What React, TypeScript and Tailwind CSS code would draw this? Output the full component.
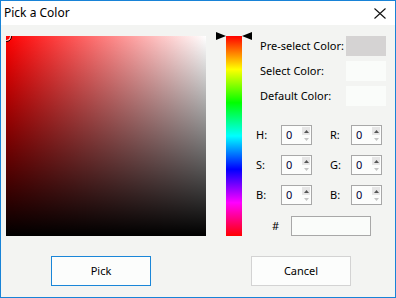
import React from 'react'

const font = { fontFamily: '"Segoe UI", "Noto Sans", "DejaVu Sans", sans-serif' }

const Spin: React.FC<{ label: string; labelW: string }> = ({ label, labelW }) => (
  <div className="flex items-center">
    <span className={`${labelW} text-[11px] text-black`}>{label}</span>
    <div className="flex h-[20px] w-[31px] items-stretch border border-[#a8a8a8] bg-[#fcfdfc]">
      <span className="flex-1 pl-[4px] text-[11px] leading-[18px] text-[#000033]">0</span>
      <div className="flex w-[9px] flex-col py-[1px] pr-[1px]">
        <div className="flex flex-1 items-center justify-center bg-[#e6e6e6]">
          <svg width="5" height="3" viewBox="0 0 5 3">
            <polygon points="2.5,0 5,3 0,3" fill="#555" />
          </svg>
        </div>
        <div className="flex flex-1 items-center justify-center">
          <svg width="5" height="3" viewBox="0 0 5 3">
            <polygon points="0,0 5,0 2.5,3" fill="#c4c4c4" />
          </svg>
        </div>
      </div>
    </div>
  </div>
)

export default function App() {
  return (
    <div
      className="flex h-[298px] w-[396px] flex-col border border-[#1883d7] bg-[#f3f4f2] text-black"
      style={font}
    >
      <div className="flex h-[24px] items-center justify-between bg-white pl-[3px] pr-[9px]">
        <span className="text-[12px]">Pick a Color</span>
        <svg width="12" height="11" viewBox="0 0 12 11">
          <path d="M0.5 0.5 L11.5 10.5 M11.5 0.5 L0.5 10.5" stroke="#111" strokeWidth="1.1" />
        </svg>
      </div>

      <div className="flex pl-[5px] pt-[11px]">
        <div className="relative h-[200px] w-[200px] overflow-hidden bg-[linear-gradient(to_top,#000,transparent),linear-gradient(to_left,#fff,#f00)]">
          <div className="absolute -left-[5px] -top-[5px] h-[11px] w-[11px] rounded-full border border-black">
            <div className="h-full w-full rounded-full border border-white" />
          </div>
        </div>

        <div className="relative ml-[10px] flex w-[36px] justify-center">
          <div className="h-[200px] w-[16px] bg-[linear-gradient(to_bottom,#f00,#ff0,#0f0,#0ff,#00f,#f0f,#f00)]" />
          <svg className="absolute left-0 -top-[4px]" width="10" height="8" viewBox="0 0 10 8">
            <polygon points="0,0 10,4 0,8" fill="#000" />
          </svg>
          <svg className="absolute right-0 -top-[4px]" width="10" height="8" viewBox="0 0 10 8">
            <polygon points="10,0 0,4 10,8" fill="#000" />
          </svg>
        </div>

        <div className="ml-[4px] flex w-[130px] flex-col">
          <div className="flex flex-col gap-[5px]">
            <div className="flex h-[20px] items-center justify-between pl-[4px]">
              <span className="whitespace-nowrap text-[11px]">Pre-select Color:</span>
              <div className="h-[20px] w-[40px] bg-[#d5d3d3]" />
            </div>
            <div className="flex h-[20px] items-center justify-between pl-[4px]">
              <span className="whitespace-nowrap text-[11px]">Select Color:</span>
              <div className="h-[20px] w-[40px] bg-[#fafcfa]" />
            </div>
            <div className="flex h-[20px] items-center justify-between pl-[4px]">
              <span className="whitespace-nowrap text-[11px]">Default Color:</span>
              <div className="h-[20px] w-[40px] bg-[#fafcfa]" />
            </div>
          </div>

          <div className="mt-[19px] flex flex-col gap-[10px]">
            <div className="flex gap-[18px]">
              <Spin label="H:" labelW="w-[25px]" />
              <Spin label="R:" labelW="w-[21px]" />
            </div>
            <div className="flex gap-[18px]">
              <Spin label="S:" labelW="w-[25px]" />
              <Spin label="G:" labelW="w-[21px]" />
            </div>
            <div className="flex gap-[18px]">
              <Spin label="B:" labelW="w-[25px]" />
              <Spin label="B:" labelW="w-[21px]" />
            </div>
          </div>

          <div className="mt-[11px] flex items-center">
            <span className="w-[35px] pl-[16px] text-[11px]">#</span>
            <div className="h-[20px] w-[80px] border border-[#a8a8a8] bg-[#fafcfa]" />
          </div>
        </div>
      </div>

      <div className="mt-[20px] flex pl-[50px]">
        <button className="h-[30px] w-[100px] border border-[#1a86d8] bg-[#fcfdfc] text-[11px]">Pick</button>
        <button className="ml-[100px] h-[30px] w-[100px] border border-[#d3d3d3] bg-[#fcfdfc] text-[11px]">Cancel</button>
      </div>
    </div>
  )
}
